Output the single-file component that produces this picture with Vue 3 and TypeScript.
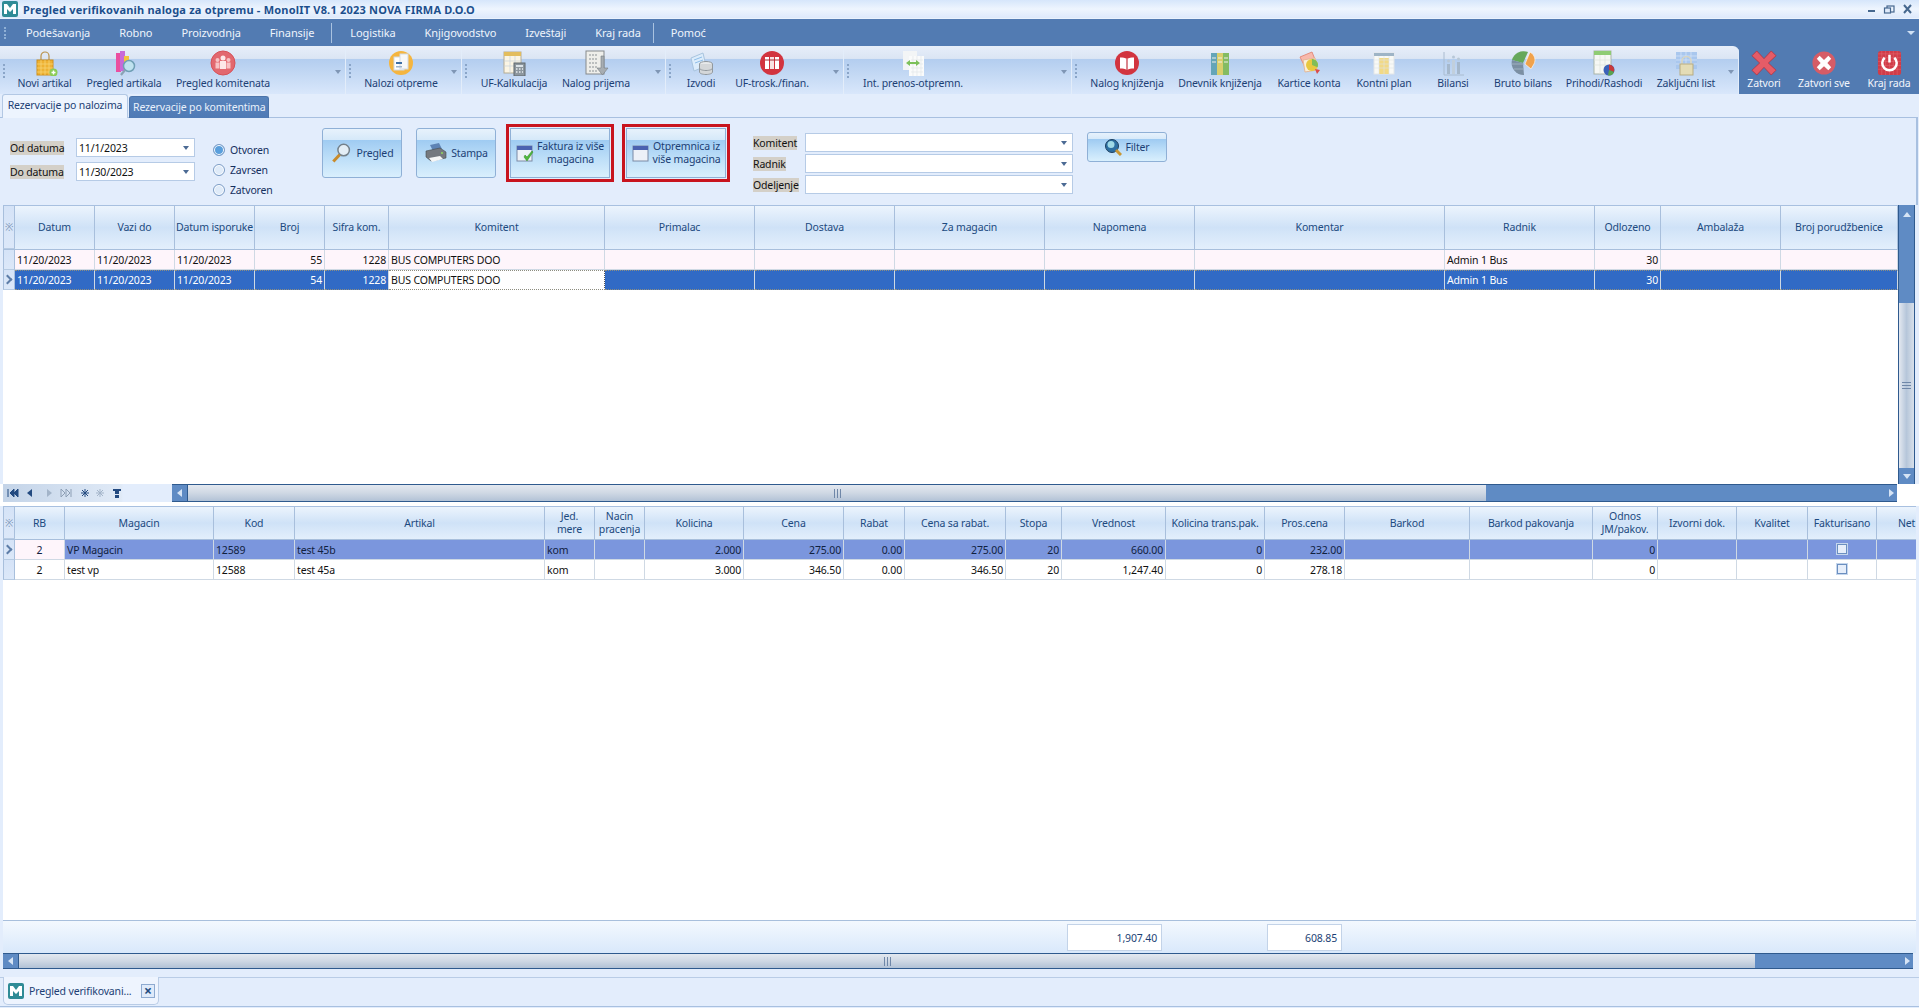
<script setup lang="ts">
interface Tool { label: string; icon: string; w: number }
interface Group { w: number; more?: boolean; tools: Tool[] }
interface Col { title: string; w: number; align?: string }

const menuLeft = ["Podešavanja", "Robno", "Proizvodnja", "Finansije"];
const menuMid = ["Logistika", "Knjigovodstvo", "Izveštaji", "Kraj rada"];

const groups: Group[] = [
  { w: 346, more: true, tools: [
    { label: "Novi artikal", icon: "bag", w: 73 },
    { label: "Pregled artikala", icon: "books", w: 86 },
    { label: "Pregled komitenata", icon: "people", w: 112 },
  ] },
  { w: 116, more: true, tools: [{ label: "Nalozi otpreme", icon: "orders", w: 94 }] },
  { w: 204, more: true, tools: [
    { label: "UF-Kalkulacija", icon: "calc", w: 88 },
    { label: "Nalog prijema", icon: "receipt", w: 76 },
  ] },
  { w: 178, more: true, tools: [
    { label: "Izvodi", icon: "db", w: 54 },
    { label: "UF-trosk./finan.", icon: "binders", w: 88 },
  ] },
  { w: 228, more: true, tools: [{ label: "Int. prenos-otpremn.", icon: "transfer", w: 122 }] },
  { w: 667, more: true, tools: [
    { label: "Nalog knjiženja", icon: "book", w: 94 },
    { label: "Dnevnik knjiženja", icon: "shelf", w: 92 },
    { label: "Kartice konta", icon: "cards", w: 86 },
    { label: "Kontni plan", icon: "plan", w: 64 },
    { label: "Bilansi", icon: "bars", w: 74 },
    { label: "Bruto bilans", icon: "pie", w: 66 },
    { label: "Prihodi/Rashodi", icon: "income", w: 96 },
    { label: "Zaključni list", icon: "lock", w: 68 },
  ] },
];

const closeTools: Tool[] = [
  { label: "Zatvori", icon: "close", w: 50 },
  { label: "Zatvori sve", icon: "closeAll", w: 70 },
  { label: "Kraj rada", icon: "power", w: 60 },
];

const icons: Record<string, string> = {
  bag: '<path d="M9 10V6a4 4 0 0 1 8 0v4" fill="none" stroke="#b9924a" stroke-width="1.2"/><rect x="5" y="10" width="16" height="15" fill="#eeb233" stroke="#d08f1c"/><path d="M5 14h16M5 18h16M5 22h16M9 10v15M13 10v15M17 10v15" stroke="#f8d77b" stroke-width=".7"/><circle cx="21.500" cy="22.500" r="4" fill="#8ccc58"/><path d="M19.500 22.500h4M21.500 20.500v4" stroke="#fff" stroke-width="1.4"/>',
  books: '<rect x="5" y="3" width="5" height="19" fill="#ea4fa0"/><rect x="9" y="1" width="5" height="20" fill="#c86ad8"/><rect x="13" y="6" width="5" height="15" fill="#f2c33c"/><circle cx="18" cy="16" r="5.500" fill="#bfe2ef" stroke="#6f9fb5" stroke-width="1.500"/><path d="M14 20l-4 5" stroke="#8aa2b5" stroke-width="2.200"/>',
  people: '<circle cx="13" cy="13" r="12" fill="#e2686f"/><circle cx="13" cy="13" r="12" fill="none" stroke="#d65259"/><circle cx="13" cy="8" r="2.500" fill="#fde8e8"/><path d="M10 11h6v8h-6z" fill="#fde8e8"/><circle cx="7.500" cy="10" r="2" fill="#f7c3c5"/><path d="M5.500 12.500h4v6h-4z" fill="#f7c3c5"/><circle cx="18.500" cy="10" r="2" fill="#f7c3c5"/><path d="M16.500 12.500h4v6h-4z" fill="#f7c3c5"/>',
  orders: '<circle cx="13" cy="13" r="12" fill="#f5b53f"/><rect x="6" y="7" width="10" height="13" fill="#fff" stroke="#d3dbe4"/><rect x="12" y="4" width="8" height="15" fill="#f8f8f8" stroke="#d3dbe4"/><rect x="8" y="12" width="6" height="2" fill="#3f6fa5"/><rect x="8" y="16" width="6" height="1.500" fill="#9fb5cc"/>',
  calc: '<rect x="3" y="2" width="17" height="21" fill="#fbf5e4" stroke="#b5ac93"/><rect x="3" y="2" width="17" height="4" fill="#e3bd5d"/><path d="M3 11h17M3 16h17M9 6v17M14 6v17" stroke="#c7d2dc" stroke-width=".7"/><rect x="13" y="13" width="11" height="13" fill="#8d979e" stroke="#5f686e"/><rect x="15" y="15" width="7" height="2" fill="#dbe3e8"/><path d="M15 19h1.500M18 19h1.500M21 19h1M15 22h1.500M18 22h1.500M21 22h1" stroke="#e8edf0" stroke-width="1.300"/>',
  receipt: '<rect x="3" y="1" width="18" height="23" fill="#eeeeea" stroke="#85898c"/><path d="M6 5h8M6 9h8M6 13h8M6 17h8M6 21h8" stroke="#8a8f93" stroke-width="1.200" stroke-dasharray="2 1"/><path d="M18 6h3v12h4l-5.500 7-5.500-7h4z" fill="#a7adb2" stroke="#777d82" stroke-width=".6"/>',
  db: '<path d="M3 8l12-5 3 13-12 5z" fill="#dcecfb" stroke="#a8c4de"/><path d="M6 10l8-3M7 13l8-3" stroke="#8ebde8"/><ellipse cx="18" cy="14" rx="6.500" ry="2.500" fill="#e7e9ea" stroke="#92999e"/><path d="M11.500 14v8c0 1.500 3 2.500 6.500 2.500s6.500-1 6.500-2.500v-8" fill="#d4d7d9" stroke="#92999e"/><path d="M11.500 18c0 1.500 3 2.500 6.500 2.500s6.500-1 6.500-2.500" fill="none" stroke="#92999e"/>',
  binders: '<circle cx="13" cy="13" r="12" fill="#d2343f"/><rect x="6" y="7" width="4" height="12" fill="#fff"/><rect x="11" y="7" width="4" height="12" fill="#f7e4e4"/><rect x="16" y="7" width="4" height="12" fill="#fff"/><path d="M6 10h14" stroke="#a52a34"/>',
  transfer: '<rect x="3" y="1" width="14" height="19" fill="#f3f5f6"/><rect x="9" y="6" width="15" height="20" fill="#fafbfb"/><path d="M11 10h12M11 14h12M11 18h12M11 22h12M13 6v20M17 6v20M21 6v20" stroke="#e1e6ea" stroke-width=".7"/><path d="M6 13l4-3v2h6v-2l4 3-4 3v-2h-6v2z" fill="#7cc05a"/>',
  book: '<circle cx="13" cy="13" r="12" fill="#d2343f"/><path d="M13 9c-2-1.500-4-1.500-7-1.500v11c3 0 5 0 7 1.500 2-1.500 4-1.500 7-1.500v-11c-3 0-5 0-7 1.500z" fill="#fff"/><path d="M13 9v11" stroke="#c23440" stroke-width="1.200"/>',
  shelf: '<rect x="4" y="3" width="6" height="22" fill="#64a5b8"/><rect x="10" y="3" width="6" height="22" fill="#d9cf6c"/><rect x="16" y="3" width="6" height="22" fill="#84bb62"/><path d="M5 8h4M5 12h4M11 8h4M11 12h4M17 8h4M17 12h4" stroke="#f0f0e8"/>',
  cards: '<path d="M4 7l12-5 4 10-11 5z" fill="#f8b9ac" stroke="#e48d7e"/><path d="M7 10l12-2 2 12-12 2z" fill="#fbefd7" stroke="#e4b99a"/><circle cx="16" cy="15" r="6" fill="#e8c83f"/><path d="M16 15V9a6 6 0 0 1 5.500 8.300z" fill="#80bd57"/><path d="M19 19l5 1-3 4z" fill="#d94b4b"/>',
  plan: '<rect x="3" y="3" width="20" height="21" fill="#f8f9f6" stroke="#e3e6e8"/><rect x="3" y="3" width="20" height="3" fill="#9eb4c6"/><rect x="8" y="8" width="10" height="16" fill="#f1d987"/><path d="M3 10h20M3 14h20M3 18h20M8 6v18M13 6v18M18 6v18" stroke="#dfe4e8" stroke-width=".6"/>',
  bars: '<path d="M4 2v23h20" fill="none" stroke="#aabcd0"/><rect x="7" y="14" width="3" height="10" fill="#a5b8cc"/><rect x="12" y="10" width="3" height="14" fill="#c1cfdc"/><rect x="17" y="12" width="3" height="12" fill="#a5b8cc"/><circle cx="8.500" cy="11" r="1.500" fill="#b7c7d7"/><circle cx="13.500" cy="7" r="1.500" fill="#b7c7d7"/><circle cx="18.500" cy="9" r="1.500" fill="#b7c7d7"/>',
  pie: '<path d="M13 13l5-11a12 12 0 0 0-16 8z" fill="#66a85b"/><path d="M13 13L2 10a12 12 0 0 0 12 15z" fill="#7b8fa3"/><path d="M2 14h12M4 19h10" stroke="#9fb0c0"/><path d="M15 14l5-12c5 3 6 8 4 12l-3 5z" fill="#f0a24c" stroke="#fff" stroke-width=".6"/>',
  income: '<rect x="3" y="1" width="17" height="23" fill="#f6f8f4" stroke="#aab5a8"/><rect x="3" y="1" width="17" height="4" fill="#8fcc73"/><path d="M3 10h17M3 15h17M9 5v19M14 5v19" stroke="#dde4da" stroke-width=".7"/><circle cx="18" cy="20" r="5.500" fill="#3b62b8"/><path d="M18 20v-5.500a5.500 5.500 0 0 1 5 7.500z" fill="#c83a3a"/><path d="M18 20l5 2a5.500 5.500 0 0 1-6 3.500z" fill="#5ba34e"/>',
  lock: '<rect x="3" y="2" width="21" height="17" fill="#a9c7ee"/><path d="M3 6h21M3 10h21M3 14h21M8 2v17M13 2v17M18 2v17" stroke="#d3e2f6" stroke-width=".8"/><path d="M9 15v-4a4.500 4.500 0 0 1 9 0v4" fill="none" stroke="#d8d5c2" stroke-width="1.600"/><rect x="7" y="14" width="13" height="11" fill="#e4dcb6" stroke="#b7ac82"/>',
  close: '<path d="M6 1l7.500 8L21 1l5 5-8 7.500 8 7.500-5 5-7.500-8L6 26l-5-5 8-7.500L1 6z" fill="#e55c67" stroke="#bb2f3b" stroke-width=".8"/>',
  closeAll: '<circle cx="13.500" cy="13.500" r="12" fill="#d65c66"/><path d="M9 6l4.500 4.500L18 6l3 3-4 4.500 4 4.500-3 3-4.500-4-4.500 4-3-3 4-4.500-4-4.500z" fill="#fff"/>',
  power: '<rect x="2" y="1" width="24" height="25" rx="3" fill="#d13c48"/><path d="M2 4h24M2 8h24M2 12h24M2 16h24M2 20h24M6 1v25M10 1v25M14 1v25M18 1v25M22 1v25" stroke="#e46d76" stroke-width=".5"/><path d="M9 8a7.500 7.500 0 1 0 10 0" fill="none" stroke="#fff" stroke-width="2.600"/><path d="M14 5v8" stroke="#fff" stroke-width="2.600"/>',
  loupe: '<circle cx="11" cy="7" r="5" fill="#e3eef6" stroke="#74818b" stroke-width="1.300"/><path d="M7.500 11L2 17" stroke="#c88b2c" stroke-width="2.600"/>',
  printer: '<path d="M6 4l9-2 3 6-9 2z" fill="#5d83b5"/><path d="M2 10l14-3 6 4v6l-15 3-5-4z" fill="#75797f" stroke="#45494e" stroke-width=".6"/><path d="M5 17l11-2 3 3-11 3z" fill="#f6f6f6"/><circle cx="18" cy="12" r="1" fill="#8fd95b"/>',
  calCheck: '<rect x="1" y="2" width="15" height="15" fill="#edf1f8" stroke="#7b8aa5"/><rect x="1" y="2" width="15" height="4" fill="#4b62b0"/><path d="M8 13l3 4 6-9-1-1-5 6-2-2z" fill="#50b83c" stroke="#2f8a26" stroke-width=".5"/>',
  cal: '<rect x="1" y="2" width="15" height="15" fill="#edf1f8" stroke="#7b8aa5"/><rect x="1" y="2" width="15" height="4" fill="#4b62b0"/>',
  filter: '<circle cx="8" cy="8" r="6.500" fill="#2d6fa2" stroke="#1d3f5f"/><circle cx="7" cy="6.500" r="3.500" fill="#9fd9e6"/><path d="M12 12l5 5" stroke="#c89633" stroke-width="3"/>',
};

const rezColumns: Col[] = [
  { title: "Datum", w: 80 }, { title: "Vazi do", w: 80 }, { title: "Datum isporuke", w: 80 },
  { title: "Broj", w: 70, align: "r" }, { title: "Sifra kom.", w: 64, align: "r" },
  { title: "Komitent", w: 216 }, { title: "Primalac", w: 150 }, { title: "Dostava", w: 140 },
  { title: "Za magacin", w: 150 }, { title: "Napomena", w: 150 }, { title: "Komentar", w: 250 },
  { title: "Radnik", w: 150 }, { title: "Odlozeno", w: 66, align: "r" }, { title: "Ambalaža", w: 120 },
  { title: "Broj porudžbenice", w: 117 },
];

const rezRows: string[][] = [
  ["11/20/2023", "11/20/2023", "11/20/2023", "55", "1228", "BUS COMPUTERS DOO", "", "", "", "", "", "Admin 1 Bus", "30", "", ""],
  ["11/20/2023", "11/20/2023", "11/20/2023", "54", "1228", "BUS COMPUTERS DOO", "", "", "", "", "", "Admin 1 Bus", "30", "", ""],
];

const stavkaColumns: Col[] = [
  { title: "RB", w: 50, align: "c" }, { title: "Magacin", w: 149 }, { title: "Kod", w: 81 },
  { title: "Artikal", w: 250 }, { title: "Jed.\nmere", w: 50 }, { title: "Nacin\npracenja", w: 50 },
  { title: "Kolicina", w: 99, align: "r" }, { title: "Cena", w: 100, align: "r" }, { title: "Rabat", w: 61, align: "r" },
  { title: "Cena sa rabat.", w: 101, align: "r" }, { title: "Stopa", w: 56, align: "r" }, { title: "Vrednost", w: 104, align: "r" },
  { title: "Kolicina trans.pak.", w: 99, align: "r" }, { title: "Pros.cena", w: 80, align: "r" }, { title: "Barkod", w: 125 },
  { title: "Barkod pakovanja", w: 123 }, { title: "Odnos\nJM/pakov.", w: 65, align: "r" }, { title: "Izvorni dok.", w: 79 },
  { title: "Kvalitet", w: 71 }, { title: "Fakturisano", w: 69, align: "c" }, { title: "Net", w: 60 },
];

const stavkaRows: string[][] = [
  ["2", "VP Magacin", "12589", "test 45b", "kom", "", "2.000", "275.00", "0.00", "275.00", "20", "660.00", "0", "232.00", "", "", "0", "", "", "", ""],
  ["2", "test vp", "12588", "test 45a", "kom", "", "3.000", "346.50", "0.00", "346.50", "20", "1,247.40", "0", "278.18", "", "", "0", "", "", "", ""],
];

const statuses = ["Otvoren", "Zavrsen", "Zatvoren"];
const filters = ["Komitent", "Radnik", "Odeljenje"];

function colTemplate(cols: Col[]) {
  return "12px " + cols.map((c) => c.w + "px").join(" ");
}
</script>

<template>
  <div class="window">
    <header class="title">
      <svg class="logo" viewBox="0 0 16 16">
        <rect width="16" height="16" rx="2" fill="#2f8b96" />
        <path d="M2 13V3h3l3 4 3-4h3v10h-3V8l-3 3-3-3v5z" fill="#fff" />
      </svg>
      <span class="title-text">Pregled verifikovanih naloga za otpremu - MonolIT V8.1 2023 NOVA FIRMA D.O.O</span>
      <div class="win-buttons">
        <svg viewBox="0 0 54 12" width="54" height="12">
          <rect x="3" y="7" width="7" height="2" fill="#46688f" />
          <rect x="22" y="3" width="7" height="6" fill="none" stroke="#46688f" stroke-width="1.200" />
          <rect x="19.500" y="5" width="6" height="5" fill="#dfeafa" stroke="#46688f" stroke-width="1.200" />
          <path d="M39 2l7 8M46 2l-7 8" stroke="#46688f" stroke-width="2" />
        </svg>
      </div>
    </header>

    <nav class="menu">
      <span class="menu-grip"></span>
      <span v-for="m in menuLeft" :key="m" class="menu-item">{{ m }}</span>
      <span class="menu-sep"></span>
      <span v-for="m in menuMid" :key="m" class="menu-item">{{ m }}</span>
      <span class="menu-sep last"></span>
      <span class="menu-item">Pomoć</span>
      <span class="menu-more"></span>
    </nav>

    <div class="toolbar">
      <div class="tool-strip">
        <div v-for="(g, gi) in groups" :key="gi" class="tool-group" :style="{ width: g.w + 'px' }">
          <span class="grip"></span>
          <div v-for="t in g.tools" :key="t.label" class="tool" :style="{ width: t.w + 'px' }">
            <svg class="tool-icon" viewBox="0 0 26 26" v-html="icons[t.icon]"></svg>
            <span>{{ t.label }}</span>
          </div>
          <span v-if="g.more" class="tool-more"></span>
        </div>
      </div>
      <div class="close-tools">
        <div v-for="t in closeTools" :key="t.label" class="tool light" :style="{ width: t.w + 'px' }">
          <svg class="tool-icon" viewBox="0 0 27 27" v-html="icons[t.icon]"></svg>
          <span>{{ t.label }}</span>
        </div>
      </div>
    </div>

    <div class="tabs">
      <span class="tab active">Rezervacije po nalozima</span>
      <span class="tab">Rezervacije po komitentima</span>
    </div>

    <section class="filters">
      <div class="dates">
        <div class="date-row">
          <label class="caption">Od datuma</label>
          <div class="combo date-combo">11/1/2023<i class="caret"></i></div>
        </div>
        <div class="date-row">
          <label class="caption">Do datuma</label>
          <div class="combo date-combo">11/30/2023<i class="caret"></i></div>
        </div>
      </div>
      <div class="radios">
        <div v-for="(s, i) in statuses" :key="s" class="radio-row">
          <i class="radio" :class="{ on: i === 0 }"></i>{{ s }}
        </div>
      </div>
      <div class="actions">
        <button class="btn plain">
          <svg viewBox="0 0 20 20" width="23" height="23" v-html="icons.loupe"></svg>Pregled
        </button>
        <button class="btn plain">
          <svg viewBox="0 0 24 24" width="24" height="24" v-html="icons.printer"></svg>Stampa
        </button>
        <button class="btn wide marked">
          <svg viewBox="0 0 18 18" width="18" height="18" v-html="icons.calCheck"></svg>
          <span>Faktura iz više<br />magacina</span>
        </button>
        <button class="btn wide marked">
          <svg viewBox="0 0 18 18" width="18" height="18" v-html="icons.cal"></svg>
          <span>Otpremnica iz<br />više magacina</span>
        </button>
      </div>
      <div class="party">
        <div v-for="f in filters" :key="f" class="party-row">
          <label class="caption">{{ f }}</label>
          <div class="combo party-combo"><i class="caret"></i></div>
        </div>
      </div>
      <button class="btn filter-btn">
        <svg viewBox="0 0 18 18" width="18" height="18" v-html="icons.filter"></svg>Filter
      </button>
    </section>

    <section class="grid-top">
      <div class="grid-wrap">
        <div class="row head" :style="{ gridTemplateColumns: colTemplate(rezColumns), height: '45px' }">
          <div class="ind">※</div>
          <div v-for="c in rezColumns" :key="c.title" class="hcell">{{ c.title }}</div>
        </div>
        <div
          v-for="(r, ri) in rezRows"
          :key="ri"
          class="row data"
          :class="ri === 0 ? 'pink' : 'selected'"
          :style="{ gridTemplateColumns: colTemplate(rezColumns) }"
        >
          <div class="ind"><b v-if="ri === 1" class="chev"></b></div>
          <div
            v-for="(v, ci) in r"
            :key="ci"
            class="cell"
            :class="[rezColumns[ci].align, { focus: ri === 1 && ci === 5 }]"
          >{{ v }}</div>
        </div>
      </div>
      <div class="vscroll">
        <div class="vbtn"><i class="tri up"></i></div>
        <div class="vfill top"></div>
        <div class="vthumb"><i class="grip-lines"></i></div>
        <div class="vbtn bottom"><i class="tri down"></i></div>
      </div>
    </section>

    <div class="scroll-line">
      <div class="navigator">
        <svg viewBox="0 0 125 14" width="125" height="14">
          <path d="M5 3v8M11 3L7 7l4 4zM15 3l-4 4 4 4z" fill="#234a80" stroke="#234a80" />
          <path d="M29 3l-5 4 5 4z" fill="#234a80" />
          <path d="M44 3l5 4-5 4z" fill="#a3b4c9" />
          <path d="M58 3l4 4-4 4zM63 3l4 4-4 4zM68 3v8" fill="none" stroke="#8d9fb5" />
          <path d="M78 7h8M82 3v8M79 4l6 6M85 4l-6 6" stroke="#234a80" />
          <path d="M93 7h8M97 3v8M94 4l6 6M100 4l-6 6" stroke="#a3b4c9" />
          <path d="M110 3h8v2h-2v3h-4V5h-2zM112 9h4v3h-4z" fill="#234a80" />
        </svg>
      </div>
      <div class="hscroll top-h">
        <div class="hbtn"><i class="tri left"></i></div>
        <div class="hthumb" style="width: 1298px"><i class="grip-v"></i></div>
        <div class="hfill"><i class="tri right"></i></div>
      </div>
    </div>

    <section class="grid-bottom">
      <div class="clip">
        <div class="row head" :style="{ gridTemplateColumns: colTemplate(stavkaColumns), height: '34px' }">
          <div class="ind">※</div>
          <div v-for="c in stavkaColumns" :key="c.title" class="hcell">{{ c.title }}</div>
        </div>
        <div
          v-for="(r, ri) in stavkaRows"
          :key="ri"
          class="row data"
          :class="ri === 0 ? 'blue' : 'plainrow'"
          :style="{ gridTemplateColumns: colTemplate(stavkaColumns) }"
        >
          <div class="ind"><b v-if="ri === 0" class="chev dark"></b></div>
          <div
            v-for="(v, ci) in r"
            :key="ci"
            class="cell"
            :class="[stavkaColumns[ci].align, { first: ci === 0 }]"
          >
            <i v-if="ci === 19" class="check"></i>{{ v }}
          </div>
        </div>
      </div>
    </section>

    <div class="totals">
      <div class="total t1">1,907.40</div>
      <div class="total t2">608.85</div>
    </div>

    <div class="hscroll bottom-h">
      <div class="hbtn"><i class="tri left"></i></div>
      <div class="hthumb" style="width: 1736px"><i class="grip-v"></i></div>
      <div class="hfill"><i class="tri right"></i></div>
    </div>

    <footer class="mdi">
      <div class="mdi-tab">
        <svg class="mdi-logo" viewBox="0 0 16 16">
          <rect width="16" height="16" rx="2" fill="#2f8b96" />
          <path d="M2 13V3h3l3 4 3-4h3v10h-3V8l-3 3-3-3v5z" fill="#fff" />
        </svg>
        <span>Pregled verifikovani...</span>
        <i class="mdi-close">×</i>
      </div>
    </footer>
  </div>
</template>

<style>
html,
body {
  margin: 0;
  overflow: hidden;
  background: #e3edfc;
}
</style>

<style scoped>
.window {
  width: 1919px;
  height: 1008px;
  overflow: hidden;
  display: flex;
  flex-direction: column;
  background: #e3edfc;
  font-family: "Noto Sans", "Liberation Sans", sans-serif;
  font-size: 10.5px;
  letter-spacing: -0.15px;
  color: #15305f;
}

.title {
  height: 18px;
  display: flex;
  align-items: center;
  gap: 5px;
  padding-left: 2px;
  background: linear-gradient(#d6e6fb, #eef5fe 50%, #dde9fb);
}
.logo {
  width: 16px;
  height: 16px;
}
.title-text {
  font-weight: 700;
  color: #1c4f8d;
  font-size: 11px;
  letter-spacing: 0.2px;
}
.win-buttons {
  margin-left: auto;
  height: 12px;
}

.menu {
  height: 28px;
  display: flex;
  align-items: center;
  gap: 29px;
  padding-left: 26px;
  background: #527bb2;
  border-top: 1px solid #eaf2fd;
  box-sizing: border-box;
  color: #eef4fc;
  position: relative;
  font-size: 11px;
  letter-spacing: -0.1px;
}
.menu-grip {
  position: absolute;
  left: 4px;
  top: 8px;
  height: 12px;
  border-left: 2px dotted #8fb0d6;
}
.menu-sep {
  width: 1px;
  height: 20px;
  background: #a9c2e0;
  margin: 0 -11px 0 -12px;
}
.menu-sep.last {
  margin: 0 -12px 0 -17px;
}
.menu-more {
  position: absolute;
  right: 4px;
  top: 12px;
  border: 4px solid transparent;
  border-top-color: #cfe0f4;
}

.toolbar {
  height: 48px;
  display: flex;
  background: #527bb2;
}
.tool-strip {
  display: flex;
  width: 1739px;
  border-radius: 0 6px 0 0;
  overflow: hidden;
  background: linear-gradient(#e7eef9, #dbe5f4 26%, #b3cdef 27%, #c4d9f4 60%, #d9e7fb);
}
.tool-group {
  position: relative;
  display: flex;
  padding-left: 8px;
  box-sizing: border-box;
  border-right: 1px solid #e3edfa;
}
.grip {
  position: absolute;
  left: 3px;
  top: 18px;
  height: 14px;
  border-left: 2px dotted #8aa5c8;
}
.tool-more {
  position: absolute;
  right: 4px;
  top: 24px;
  border: 3px solid transparent;
  border-top: 4px solid #7f96b5;
}
.tool {
  display: flex;
  flex-direction: column;
  align-items: center;
  padding-top: 4px;
  color: #1c3f75;
  white-space: nowrap;
  box-sizing: border-box;
}
.tool-icon {
  width: 26px;
  height: 26px;
  flex: none;
}
.tool span {
  line-height: 13px;
  margin-top: 1px;
}
.tool.light {
  color: #f2f6fc;
}
.close-tools {
  display: flex;
  flex: 1;
}

.tabs {
  height: 23px;
  display: flex;
  align-items: flex-end;
  padding-left: 2px;
  gap: 1px;
}
.tab {
  height: 21px;
  line-height: 21px;
  padding: 0 3px;
  width: 132px;
  text-align: center;
  background: linear-gradient(#5884bd, #4f7ab5);
  color: #eaf2fc;
  border: 1px solid #4b74ab;
  border-bottom: none;
  border-radius: 3px 3px 0 0;
  white-space: nowrap;
  margin-bottom: -1px;
  z-index: 1;
}
.tab.active {
  height: 23px;
  width: 118px;
  background: #edf4fe;
  color: #1c3f75;
  border-color: #b3c8e4;
}

.filters {
  height: 88px;
  display: flex;
  align-items: flex-start;
  box-sizing: border-box;
  border-top: 1px solid #a8c0e0;
  border-right: 2px solid #a8c0e0;
  margin-right: 1px;
  padding-left: 10px;
  color: #15305f;
}
.dates {
  width: 185px;
  padding-top: 20px;
  display: flex;
  flex-direction: column;
  gap: 5px;
}
.date-row {
  display: flex;
  align-items: center;
  justify-content: space-between;
}
.caption {
  background: #d4d0c8;
  color: #111;
  padding: 0;
  line-height: 14px;
}
.combo {
  position: relative;
  height: 19px;
  line-height: 18px;
  padding-left: 2px;
  background: #fff;
  box-sizing: border-box;
  border: 1px solid #b6cbe6;
  color: #111;
}
.date-combo {
  width: 119px;
}
.caret {
  position: absolute;
  right: 5px;
  top: 7px;
  border: 3px solid transparent;
  border-top: 4px solid #4b6a94;
}
.radios {
  margin-left: 18px;
  padding-top: 22px;
  width: 109px;
}
.radio-row {
  height: 20px;
  display: flex;
  align-items: center;
  gap: 5px;
}
.radio {
  width: 10px;
  height: 10px;
  border-radius: 50%;
  border: 1px solid #7d9dc6;
  background: #dfebf9;
  box-shadow: inset 0 0 0 1px #fff;
}
.radio.on {
  background: #5a9fdc;
}
.actions {
  display: flex;
  gap: 14px;
  padding-top: 10px;
  color: #1c3f75;
}
.btn {
  display: flex;
  align-items: center;
  justify-content: center;
  gap: 3px;
  box-sizing: border-box;
  padding: 0;
  font: inherit;
  letter-spacing: inherit;
  color: #1c3f75;
  border: 1px solid #8fb0d6;
  border-radius: 3px;
  background: linear-gradient(#e7f2fc, #d6e9f9 22%, #9fcbf2 23%, #bcdef8 60%, #d9effd);
}
.btn.plain {
  width: 80px;
  height: 50px;
}
.btn.wide {
  width: 100px;
  height: 50px;
  text-align: center;
  line-height: 13px;
}
.btn.marked {
  border-radius: 0;
  outline: 3px solid #c8141e;
  outline-offset: 1px;
}
.btn.wide + .btn.wide {
  margin-left: 2px;
}
.party {
  margin-left: 27px;
  padding-top: 15px;
  display: flex;
  flex-direction: column;
  gap: 2px;
}
.party-row {
  width: 320px;
  display: flex;
  align-items: center;
  justify-content: space-between;
}
.party-combo {
  width: 268px;
}
.filter-btn {
  width: 80px;
  height: 30px;
  margin: 14px 0 0 14px;
}

.grid-top {
  height: 279px;
  display: flex;
  padding-left: 3px;
}
.grid-wrap {
  width: 1895px;
  background: #fff;
  overflow: hidden;
}
.row {
  display: grid;
  box-sizing: border-box;
}
.head {
  border-top: 1px solid #a8c0e0;
  color: #1c4a80;
  background: linear-gradient(#ecf4fd, #cfe2f7 50%, #e3effc);
  border-bottom: 1px solid #a8bfdc;
}
.ind {
  display: flex;
  align-items: center;
  justify-content: center;
  font-size: 10px;
  color: #7d97b8;
  background: linear-gradient(#d5e3f7, #dce8f9);
  border-right: 1px solid #a8bfdc;
  border-left: 1px solid #a8bfdc;
  border-bottom: 1px solid #b7cbe3;
  box-sizing: border-box;
}
.hcell {
  display: flex;
  align-items: center;
  justify-content: center;
  text-align: center;
  white-space: pre;
  border-right: 1px solid #a8bfdc;
  padding: 0 1px;
  box-sizing: border-box;
  line-height: 13px;
  overflow: hidden;
}
.data {
  height: 20px;
}
.cell {
  line-height: 20px;
  padding: 0 2px;
  box-sizing: border-box;
  white-space: nowrap;
  overflow: hidden;
  border-right: 1px solid #cfd9e4;
  border-bottom: 1px solid #cfd9e4;
  color: #111;
  position: relative;
}
.cell.r {
  text-align: right;
}
.cell.c {
  text-align: center;
}
.pink .cell {
  background: #fef5fb;
}
.selected .cell {
  background: #316ac5;
  color: #fff;
  border-bottom: 1px dotted #8d8d80;
  border-top: 1px dotted #8d8d80;
  line-height: 18px;
}
.selected .cell.focus {
  background: #fff;
  color: #111;
  border-right: 1px dotted #555;
}
.blue .cell {
  background: #7b96dd;
  color: #10213f;
}
.blue .cell.first {
  background: #fef5fb;
}
.plainrow .cell {
  background: #fff;
}
.chev {
  width: 5px;
  height: 5px;
  border-top: 2px solid #5d7da8;
  border-right: 2px solid #5d7da8;
  transform: rotate(45deg);
  margin-left: -3px;
}
.check {
  display: block;
  width: 8px;
  height: 8px;
  margin: 4px auto 0;
  border: 1px solid #6b8fc0;
  background: #e6eefa;
  box-shadow: 0 0 0 1px #c5d6ec;
}
.vscroll {
  width: 15px;
  height: 279px;
  display: flex;
  flex-direction: column;
  border-left: 1px solid #2f5a8e;
  border-right: 1px solid #2f5a8e;
  box-sizing: content-box;
  background: #5f8bc4;
}
.vbtn {
  height: 18px;
  display: flex;
  align-items: center;
  justify-content: center;
  background: #5f8bc4;
}
.vbtn.bottom {
  height: 16px;
}
.vfill.top {
  height: 80px;
}
.vthumb {
  flex: 1;
  display: flex;
  align-items: center;
  justify-content: center;
  background: linear-gradient(90deg, #e3e8f0, #b6c6da 50%, #d8e0ea);
}
.grip-lines {
  width: 9px;
  height: 5px;
  border-top: 1px solid #6f87a8;
  border-bottom: 1px solid #6f87a8;
  background: linear-gradient(#6f87a8, #6f87a8) center/100% 1px no-repeat;
}
.tri {
  display: block;
  width: 0;
  height: 0;
  border: 4px solid transparent;
}
.tri.up {
  border-top: none;
  border-bottom: 5px solid #d6e4f5;
}
.tri.down {
  border-bottom: none;
  border-top: 5px solid #d6e4f5;
}
.tri.left {
  border-left: none;
  border-right: 5px solid #d6e4f5;
}
.tri.right {
  border-right: none;
  border-left: 5px solid #d6e4f5;
}

.scroll-line {
  height: 22px;
  display: flex;
  padding-left: 3px;
  background: #fff;
  border-left: 0;
}
.navigator {
  width: 169px;
  height: 18px;
  display: flex;
  align-items: center;
  background: linear-gradient(90deg, #c4d4e8, #e0eaf7 70%, #e3edfc 71%);
  flex: none;
}
.hscroll {
  display: flex;
  height: 18px;
  box-sizing: border-box;
  border-top: 1px solid #2f5a8e;
  border-bottom: 1px solid #2f5a8e;
  background: #5f8bc4;
}
.top-h {
  width: 1725px;
}
.hbtn {
  width: 16px;
  flex: none;
  display: flex;
  align-items: center;
  justify-content: center;
  background: #5f8bc4;
  border-right: 1px solid #2f5a8e;
  box-sizing: border-box;
}
.hthumb {
  flex: none;
  display: flex;
  align-items: center;
  justify-content: center;
  background: linear-gradient(#e3e8f0, #cfd8e4 50%, #b2c2d6);
}
.grip-v {
  width: 5px;
  height: 9px;
  border-left: 1px solid #6f87a8;
  border-right: 1px solid #6f87a8;
  background: linear-gradient(#6f87a8, #6f87a8) center/1px 100% no-repeat;
}
.hfill {
  flex: 1;
  display: flex;
  align-items: center;
  justify-content: flex-end;
  padding-right: 3px;
}

.grid-bottom {
  height: 415px;
  margin-left: 3px;
  margin-right: 3px;
  background: #fff;
  border-bottom: 1px solid #a8bfdc;
  box-sizing: border-box;
  overflow: hidden;
}
.clip {
  width: 1913px;
  overflow: hidden;
}

.totals {
  height: 32px;
  position: relative;
  margin: 0 3px;
  background: linear-gradient(#f3f8fe, #d9e8fb);
}
.total {
  position: absolute;
  top: 3px;
  height: 27px;
  line-height: 27px;
  box-sizing: border-box;
  background: #fff;
  border: 1px solid #c3d3e8;
  text-align: right;
  padding-right: 4px;
  color: #1c3f75;
}
.t1 {
  left: 1064px;
  width: 95px;
}
.t2 {
  left: 1264px;
  width: 75px;
}
.bottom-h {
  width: 1910px;
  height: 16px;
  margin-left: 3px;
}

.mdi {
  margin-top: 8px;
  height: 30px;
  box-sizing: border-box;
  border-top: 1px solid #b9cce6;
  border-bottom: 1px solid #a8c0e0;
  padding-left: 3px;
}
.mdi-tab {
  width: 156px;
  height: 28px;
  display: flex;
  align-items: center;
  gap: 5px;
  box-sizing: border-box;
  padding-left: 4px;
  margin-top: -1px;
  border: 1px solid #b9cce6;
  border-top: none;
  border-radius: 0 0 5px 5px;
  background: #eef4fe;
  color: #1c3f75;
  white-space: nowrap;
}
.mdi-logo {
  width: 16px;
  height: 16px;
  flex: none;
}
.mdi-close {
  margin-left: auto;
  margin-right: 3px;
  width: 14px;
  height: 14px;
  line-height: 12px;
  font-style: normal;
  font-weight: 700;
  font-size: 14px;
  text-align: center;
  box-sizing: border-box;
  border: 1px solid #8eaad0;
  background: #dfeafa;
  color: #234a80;
}
</style>
